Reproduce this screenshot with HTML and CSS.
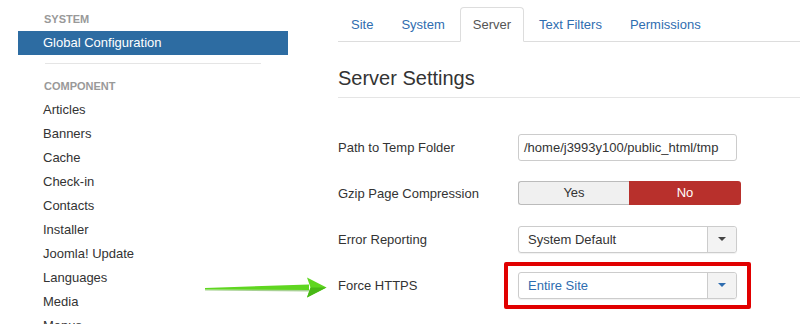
FILE: index.html
```html
<html>
	<head>
		<meta charset="utf-8">
		<link rel="stylesheet" href="styles.css">
	</head>
	<body>
		<div class="layout">
			<div class="sidebar">
				<div class="nav-header">System</div>
				<div class="nav-item active">Global Configuration</div>
				<div class="divider"></div>
				<div class="nav-header">Component</div>
				<div class="nav-item">Articles</div>
				<div class="nav-item">Banners</div>
				<div class="nav-item">Cache</div>
				<div class="nav-item">Check-in</div>
				<div class="nav-item">Contacts</div>
				<div class="nav-item">Installer</div>
				<div class="nav-item">Joomla! Update</div>
				<div class="nav-item">Languages</div>
				<div class="nav-item">Media</div>
				<div class="nav-item">Menus</div>
			</div>

			<div class="main">
				<ul class="tabs">
					<li><a>Site</a></li>
					<li><a>System</a></li>
					<li class="active"><a>Server</a></li>
					<li><a>Text Filters</a></li>
					<li><a>Permissions</a></li>
				</ul>

				<h2>Server Settings</h2>

				<div class="form">
					<div class="row">
						<label>Path to Temp Folder</label>
						<div class="input">/home/j3993y100/public_html/tmp</div>
					</div>
					<div class="row">
						<label>Gzip Page Compression</label>
						<div class="toggle">
							<span class="yes">Yes</span>
							<span class="no">No</span>
						</div>
					</div>
					<div class="row">
						<label>Error Reporting</label>
						<div class="select">
							<span class="value">System Default</span>
							<span class="caret-btn"><span class="caret"></span></span>
						</div>
					</div>
					<div class="row">
						<label>Force HTTPS</label>
						<div class="highlight">
							<div class="select chosen">
								<span class="value">Entire Site</span>
								<span class="caret-btn"><span class="caret"></span></span>
							</div>
						</div>
					</div>
				</div>
			</div>
		</div>

		<!-- annotation arrow -->
		<svg class="arrow" width="126" height="24" viewBox="0 0 126 24">
			<polygon points="2,13.5 106,13.5 106,15.5 2,14.5" fill="#3e9a12" opacity="0.45"/>
			<polygon points="2,12 106,8.5 106,14 2,13.5" fill="#5fd620"/>
			<polygon points="104,1.5 123.5,11.5 104,21.5 107.5,11.5" fill="#5fd620"/>
			<polygon points="107.5,11.5 123.5,11.5 104,21.5" fill="#48b816"/>
		</svg>
	</body>
</html>
```

FILE: styles.css
```css
body {
    margin: 0;
    font-family: "Liberation Sans", Arial, sans-serif;
    font-size: 13px;
    color: #333;
    background: #fff;
    overflow: hidden;
}

.layout {
    display: flex;
    padding-top: 7px;
}

/* sidebar */

.sidebar {
    width: 270px;
    margin-left: 18px;
    flex-shrink: 0;
}

.nav-header {
    padding-left: 26px;
    height: 24px;
    line-height: 24px;
    font-size: 11px;
    font-weight: bold;
    color: #999;
    text-transform: uppercase;
}

.divider + .nav-header {
    height: 24px;
    line-height: 25px;
}

.nav-item {
    padding-left: 25px;
    line-height: 24px;
    color: #333;
}

.nav-item.active {
    background: #2d6ca2;
    color: #fff;
}

.divider {
    height: 1px;
    background: #e5e5e5;
    margin: 8px 27px 10px 27px;
}

/* main */

.main {
    margin-left: 50px;
    flex: 1;
}

.tabs {
    display: flex;
    list-style: none;
    margin: 0;
    padding: 0;
    border-bottom: 1px solid #ddd;
}

.tabs li {
    margin-right: 2px;
    margin-bottom: -1px;
}

.tabs a {
    display: block;
    padding: 0 12px;
    line-height: 33px;
    border: 1px solid transparent;
    border-radius: 4px 4px 0 0;
    color: #2f6db0;
}

.tabs .active a {
    color: #555;
    background: #fff;
    border-color: #ddd;
    border-bottom-color: #fff;
}

h2 {
    margin: 23px 0 0 0;
    font-size: 20px;
    font-weight: normal;
    line-height: 26px;
    padding-bottom: 6px;
    border-bottom: 1px solid #e5e5e5;
    color: #333;
}

.form {
    margin-top: 35px;
}

.row {
    display: flex;
    align-items: center;
    height: 28px;
    margin-bottom: 18px;
}

.row label {
    width: 180px;
    flex-shrink: 0;
}

.input {
    box-sizing: border-box;
    width: 219px;
    height: 27px;
    line-height: 25px;
    padding-left: 5px;
    border: 1px solid #ccc;
    border-radius: 3px;
    white-space: nowrap;
    overflow: hidden;
}

.toggle {
    display: flex;
    width: 223px;
    height: 24px;
    line-height: 24px;
    text-align: center;
}

.toggle .yes {
    box-sizing: border-box;
    width: 111px;
    background: #f0f0f0;
    border: 1px solid #bbb;
    border-right: none;
    border-radius: 3px 0 0 3px;
    line-height: 22px;
}

.toggle .no {
    flex: 1;
    background: #b8302c;
    color: #fff;
    border-radius: 0 3px 3px 0;
}

.select {
    box-sizing: border-box;
    display: flex;
    width: 219px;
    height: 27px;
    border: 1px solid #ccc;
    border-radius: 3px;
    box-shadow: 0 1px 1px rgba(0, 0, 0, 0.06);
}

.select .value {
    flex: 1;
    padding-left: 9px;
    line-height: 25px;
}

.caret-btn {
    display: flex;
    align-items: center;
    justify-content: center;
    width: 28px;
    border-left: 1px solid #ccc;
    background: #f3f3f3;
    border-radius: 0 3px 3px 0;
}

.caret {
    width: 0;
    height: 0;
    border-left: 4px solid transparent;
    border-right: 4px solid transparent;
    border-top: 4px solid #444;
}

.chosen .value {
    color: #2f6db0;
}

.chosen .caret {
    border-top-color: #2f6db0;
}

/* annotation box round the Force HTTPS select */
.highlight {
    margin: -10px -14px;
    padding: 6px 10px;
    border: 4px solid #e10000;
    border-radius: 2px;
}

.arrow {
    position: absolute;
    left: 203px;
    top: 276px;
}
```
